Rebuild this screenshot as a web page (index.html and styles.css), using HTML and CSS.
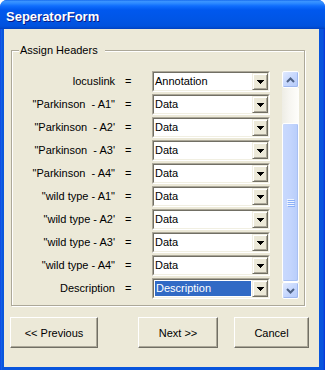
FILE: index.html
```html
<!DOCTYPE html>
<html>
<head>
<meta charset="utf-8">
<link rel="stylesheet" href="styles.css">
</head>
<body>
<div class="window">
  <div class="titlebar"><span class="title">SeperatorForm</span></div>
  <div class="client">
    <div class="group">
      <span class="legend">Assign Headers</span>
      <div class="rows">
        <div class="row"><span class="label">locuslink</span><span class="eq">=</span><div class="combo"><div class="field"><span class="value">Annotation</span><span class="drop"><svg width="7" height="4" viewBox="0 0 7 4" shape-rendering="crispEdges"><path d="M0 0h7v1H0zM1 1h5v1H1zM2 2h3v1H2zM3 3h1v1H3z"/></svg></span></div></div></div>
        <div class="row"><span class="label">"Parkinson  - A1"</span><span class="eq">=</span><div class="combo"><div class="field"><span class="value">Data</span><span class="drop"><svg width="7" height="4" viewBox="0 0 7 4" shape-rendering="crispEdges"><path d="M0 0h7v1H0zM1 1h5v1H1zM2 2h3v1H2zM3 3h1v1H3z"/></svg></span></div></div></div>
        <div class="row"><span class="label">"Parkinson  - A2'</span><span class="eq">=</span><div class="combo"><div class="field"><span class="value">Data</span><span class="drop"><svg width="7" height="4" viewBox="0 0 7 4" shape-rendering="crispEdges"><path d="M0 0h7v1H0zM1 1h5v1H1zM2 2h3v1H2zM3 3h1v1H3z"/></svg></span></div></div></div>
        <div class="row"><span class="label">"Parkinson  - A3'</span><span class="eq">=</span><div class="combo"><div class="field"><span class="value">Data</span><span class="drop"><svg width="7" height="4" viewBox="0 0 7 4" shape-rendering="crispEdges"><path d="M0 0h7v1H0zM1 1h5v1H1zM2 2h3v1H2zM3 3h1v1H3z"/></svg></span></div></div></div>
        <div class="row"><span class="label">"Parkinson  - A4"</span><span class="eq">=</span><div class="combo"><div class="field"><span class="value">Data</span><span class="drop"><svg width="7" height="4" viewBox="0 0 7 4" shape-rendering="crispEdges"><path d="M0 0h7v1H0zM1 1h5v1H1zM2 2h3v1H2zM3 3h1v1H3z"/></svg></span></div></div></div>
        <div class="row"><span class="label">"wild type - A1"</span><span class="eq">=</span><div class="combo"><div class="field"><span class="value">Data</span><span class="drop"><svg width="7" height="4" viewBox="0 0 7 4" shape-rendering="crispEdges"><path d="M0 0h7v1H0zM1 1h5v1H1zM2 2h3v1H2zM3 3h1v1H3z"/></svg></span></div></div></div>
        <div class="row"><span class="label">"wild type - A2'</span><span class="eq">=</span><div class="combo"><div class="field"><span class="value">Data</span><span class="drop"><svg width="7" height="4" viewBox="0 0 7 4" shape-rendering="crispEdges"><path d="M0 0h7v1H0zM1 1h5v1H1zM2 2h3v1H2zM3 3h1v1H3z"/></svg></span></div></div></div>
        <div class="row"><span class="label">"wild type - A3'</span><span class="eq">=</span><div class="combo"><div class="field"><span class="value">Data</span><span class="drop"><svg width="7" height="4" viewBox="0 0 7 4" shape-rendering="crispEdges"><path d="M0 0h7v1H0zM1 1h5v1H1zM2 2h3v1H2zM3 3h1v1H3z"/></svg></span></div></div></div>
        <div class="row"><span class="label">"wild type - A4"</span><span class="eq">=</span><div class="combo"><div class="field"><span class="value">Data</span><span class="drop"><svg width="7" height="4" viewBox="0 0 7 4" shape-rendering="crispEdges"><path d="M0 0h7v1H0zM1 1h5v1H1zM2 2h3v1H2zM3 3h1v1H3z"/></svg></span></div></div></div>
        <div class="row"><span class="label">Description</span><span class="eq">=</span><div class="combo"><div class="field"><span class="value sel">Description</span><span class="drop"><svg width="7" height="4" viewBox="0 0 7 4" shape-rendering="crispEdges"><path d="M0 0h7v1H0zM1 1h5v1H1zM2 2h3v1H2zM3 3h1v1H3z"/></svg></span></div></div></div>
      </div>
      <div class="scrollbar">
        <div class="sb-btn"><svg width="9" height="6" viewBox="0 0 9 6"><path d="M1 5L4.5 1.5L8 5" fill="none" stroke="#4d6185" stroke-width="2"/></svg></div>
        <div class="sb-track">
          <div class="sb-thumb"><svg width="8" height="8" viewBox="0 0 8 8" shape-rendering="crispEdges"><path d="M0 0h7v1H0zM0 2h7v1H0zM0 4h7v1H0zM0 6h7v1H0z" fill="#eef4fe"/><path d="M1 1h7v1H1zM1 3h7v1H1zM1 5h7v1H1zM1 7h7v1H1z" fill="#8cb0f8"/></svg></div>
        </div>
        <div class="sb-btn"><svg width="9" height="6" viewBox="0 0 9 6"><path d="M1 1L4.5 4.5L8 1" fill="none" stroke="#4d6185" stroke-width="2"/></svg></div>
      </div>
    </div>
    <div class="buttons">
      <button class="btn btn-prev">&lt;&lt; Previous</button>
      <button class="btn btn-next">Next &gt;&gt;</button>
      <button class="btn btn-cancel">Cancel</button>
    </div>
  </div>
</div>
</body>
</html>
```
FILE: styles.css
```css
html, body {
  margin: 0;
  padding: 0;
  background: #ffffff;
}
body {
  width: 325px;
  height: 370px;
  overflow: hidden;
  font-family: "Liberation Sans", Arial, sans-serif;
  font-size: 11px;
  color: #000;
}
.window {
  width: 325px;
  height: 370px;
  display: flex;
  flex-direction: column;
  background: linear-gradient(to right, #0831d9 0, #166aee 1px, #0855dd 2px, #0855dd 319px, #0855dd 323px, #0831d9 325px);
  border-radius: 7px 7px 0 0;
  overflow: hidden;
}
.titlebar {
  height: 29px;
  flex: none;
  box-sizing: border-box;
  padding: 4px 0 0 6px;
  display: flex;
  align-items: center;
  background: linear-gradient(to bottom, #0a5ee8 0, #3d95ff 1px, #2f8cff 3px, #0f6dfd 6px, #0058ee 10px, #0055e5 20px, #0052de 26px, #0048cc 28px, #003fbf 29px);
}
.title {
  color: #fff;
  font-weight: bold;
  font-size: 13px;
  text-shadow: 1px 1px 0 #0a1883;
}
.client {
  flex: 1;
  margin: 0 6px 3px 4px;
  background: #ece9d8;
  display: flex;
  flex-direction: column;
}
.group {
  position: relative;
  margin: 21px 0 0 7px;
  width: 294px;
  height: 256px;
  box-sizing: border-box;
  border: 1px solid #aca899;
  box-shadow: 1px 1px 0 #fff, inset 1px 1px 0 #fff;
  padding: 20px 0 0 0;
  display: flex;
}
.legend {
  position: absolute;
  top: -7px;
  left: 7px;
  padding: 0 7px 0 1px;
  background: #ece9d8;
  line-height: 13px;
}
.rows {
  display: flex;
  flex-direction: column;
  gap: 2px;
}
.row {
  display: grid;
  grid-template-columns: 103px 10px 6px 21px 118px;
  height: 21px;
  align-items: center;
}
.label {
  grid-column: 1;
  text-align: right;
  white-space: pre;
  margin-top: -2px;
}
.eq {
  grid-column: 3;
  margin-top: -2px;
}
.combo {
  grid-column: 5;
  height: 21px;
  box-sizing: border-box;
  border: 1px solid;
  border-color: #aca899 #fff #fff #aca899;
  display: flex;
}
.field {
  flex: 1;
  display: flex;
  border: 1px solid;
  border-color: #716f64 #f1efe2 #f1efe2 #716f64;
  background: #fff;
}
.value {
  flex: 1;
  padding-left: 1px;
  line-height: 17px;
}
.value.sel {
  margin: 1px;
  line-height: 15px;
  background: #316ac5;
  color: #fff;
}
.drop {
  width: 16px;
  flex: none;
  box-sizing: border-box;
  border: 1px solid;
  border-color: #f1efe2 #716f64 #716f64 #f1efe2;
  box-shadow: inset 1px 1px 0 #fff, inset -1px -1px 0 #aca899;
  background: #ece9d8;
  display: flex;
  align-items: center;
  justify-content: center;
}
.drop svg {
  display: block;
  margin: 1px 0 0 0;
}
.scrollbar {
  margin-left: 12px;
  width: 17px;
  height: 228px;
  display: flex;
  flex-direction: column;
}
.sb-btn {
  height: 17px;
  flex: none;
  box-sizing: border-box;
  border: 1px solid #fff;
  border-radius: 2px;
  background: linear-gradient(135deg, #e1eafe 0, #c6d7fd 50%, #b4c9f8 100%);
  box-shadow: inset -1px -1px 0 #9fb8f0;
  display: flex;
  align-items: center;
  justify-content: center;
}
.sb-track {
  flex: 1;
  background: linear-gradient(to right, #eeede5 0, #f6f5f0 40%, #fefefb 100%);
  display: flex;
  flex-direction: column;
}
.sb-thumb {
  margin-top: 35px;
  height: 159px;
  box-sizing: border-box;
  border: 1px solid #fff;
  border-radius: 2px;
  background: linear-gradient(to right, #c9d9fd 0, #c3d5fd 50%, #b8cdfa 100%);
  box-shadow: inset -1px -1px 0 #a8c0f4;
  display: flex;
  align-items: center;
  justify-content: center;
}
.buttons {
  display: flex;
  margin-top: 11px;
}
.btn {
  height: 31px;
  box-sizing: border-box;
  padding: 0;
  font-family: "Liberation Sans", Arial, sans-serif;
  font-size: 11px;
  color: #000;
  background: #ece9d8;
  border: 1px solid;
  border-color: #fff #716f64 #716f64 #fff;
  box-shadow: inset -1px -1px 0 #aca899;
  border-radius: 0;
}
.btn-prev { margin-left: 6px; width: 88px; }
.btn-next { margin-left: 40px; width: 80px; }
.btn-cancel { margin-left: 16px; width: 75px; }
```
